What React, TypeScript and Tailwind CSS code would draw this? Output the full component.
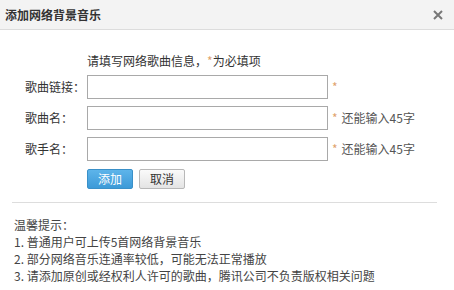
import React from "react";

const font = { fontFamily: '"Noto Sans CJK SC", "Liberation Sans", sans-serif' };

function Row({ label, hint }: { label: string; hint?: string }) {
  return (
    <div className="flex items-center h-[24px]">
      <div className="w-[87px] pl-[25px] text-[12px] text-[#333]">{label}</div>
      <input className="w-[241px] h-[24px] border border-[#a9a9a9] bg-white outline-none px-1 text-[12px]" />
      <span className="ml-[4px] text-[12px] text-[#e0a36e]">*</span>
      {hint && <span className="ml-[4px] text-[12px] text-[#555]">{hint}</span>}
    </div>
  );
}

export default function App() {
  return (
    <div className="w-[454px] h-[290px] bg-white overflow-hidden" style={font}>
      {/* header */}
      <div className="h-[30px] bg-[#f3f3f3] border-b border-[#dcdcdc] flex items-center justify-between pl-[5px] pr-[11px]">
        <span className="text-[12px] font-bold text-[#333]">添加网络背景音乐</span>
        <svg width="10" height="10" viewBox="0 0 10 10" className="text-[#777]">
          <path d="M1 1L9 9M9 1L1 9" stroke="currentColor" strokeWidth="2" />
        </svg>
      </div>

      <div className="flex flex-col">
        <div className="pl-[87px] pt-[23px] leading-[16px] text-[12px] text-[#333]">
          请填写网络歌曲信息，<span className="text-[#e0a36e]">*</span>为必填项
        </div>

        <div className="flex flex-col gap-[7px] mt-[6px]">
          <Row label="歌曲链接：" />
          <Row label="歌曲名：" hint="还能输入45字" />
          <Row label="歌手名：" hint="还能输入45字" />
        </div>

        <div className="flex gap-[6px] pl-[87px] mt-[8px]">
          <button className="w-[46px] h-[20px] rounded-[2px] border border-[#3a90c8] bg-gradient-to-b from-[#5db4ea] to-[#3c9ad8] text-white text-[12px] leading-[18px]">
            添加
          </button>
          <button className="w-[46px] h-[20px] rounded-[2px] border border-[#b8b8b8] bg-gradient-to-b from-[#fafafa] to-[#e4e4e4] text-[#333] text-[12px] leading-[18px]">
            取消
          </button>
        </div>

        <div className="ml-[12px] w-[425px] h-px bg-[#dddddd] mt-[13px]" />

        <div className="pl-[14px] mt-[13px] text-[12px] leading-[17px] text-[#444]">
          <div>温馨提示：</div>
          <div>1. 普通用户可上传5首网络背景音乐</div>
          <div>2. 部分网络音乐连通率较低，可能无法正常播放</div>
          <div>3. 请添加原创或经权利人许可的歌曲，腾讯公司不负责版权相关问题</div>
        </div>
      </div>
    </div>
  );
}
